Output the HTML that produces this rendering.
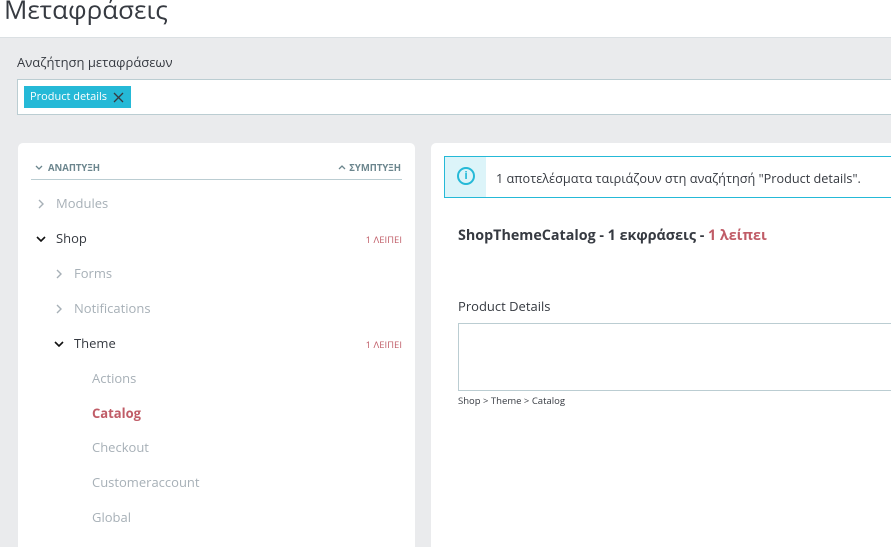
<!DOCTYPE html>
<html><head><meta charset="utf-8"><style>
*{margin:0;padding:0;box-sizing:border-box}
html,body{width:891px;height:547px;overflow:hidden}
body{background:#eaebed;font-family:"Open Sans","Liberation Sans","DejaVu Sans",sans-serif;color:#363a41;position:relative}
.hdr{position:absolute;left:0;top:0;width:891px;height:38px;background:#fff;border-bottom:1px solid #dbe0e3}
.hdr h1{position:absolute;left:4px;top:-9px;font-size:26px;font-weight:400;color:#363a41}
.lbl{position:absolute;left:17px;top:53px;font-size:13px}
.inp{position:absolute;left:17px;top:79px;width:880px;height:36px;background:#fff;border:1px solid #bbcdd2}
.chip{position:absolute;left:6px;top:6px;width:107px;height:22px;background:#25b9d7;color:#fff;font-size:11px;padding:3px 0 0 6px}
.panel{position:absolute;background:#fff;border-radius:5px;top:143px}
.row{position:absolute;font-size:13px;line-height:18px}
.miss{position:absolute;right:13px;font-size:9.5px;color:#c05c67}
.g{color:#a7b0b7}
svg.c{position:absolute}
</style></head><body>
<div class="hdr"><h1>Μεταφράσεις</h1></div>
<div class="lbl">Αναζήτηση μεταφράσεων</div>
<div class="inp"><div class="chip">Product details
<svg style="position:absolute;left:89px;top:6px" width="11" height="11" viewBox="0 0 11 11"><path d="M1 1L10 10M10 1L1 10" stroke="#363a41" stroke-width="1.3"/></svg></div></div>

<div class="panel" style="left:18px;width:397px;height:420px">
  <svg class="c" style="left:17px;top:22px" width="8" height="5" viewBox="0 0 8 5"><path d="M1 1L4 4L7 1" stroke="#6c868e" stroke-width="1.3" fill="none"/></svg>
  <div style="position:absolute;left:30px;top:18px;font-size:9.5px;font-weight:700;color:#6c868e">ΑΝΑΠΤΥΞΗ</div>
  <svg class="c" style="left:320px;top:22px" width="8" height="5" viewBox="0 0 8 5"><path d="M1 4L4 1L7 4" stroke="#6c868e" stroke-width="1.3" fill="none"/></svg>
  <div style="position:absolute;right:14px;top:18px;font-size:9.5px;font-weight:700;color:#6c868e">ΣΥΜΠΤΥΞΗ</div>
  <div style="position:absolute;left:13px;top:36px;width:371px;height:1px;background:#bbcdd2"></div>

  <svg class="c" style="left:20px;top:56px" width="6" height="10" viewBox="0 0 6 10"><path d="M1 1L5 5L1 9" stroke="#a7b0b7" stroke-width="1.4" fill="none"/></svg>
  <div class="row g" style="left:38px;top:51px">Modules</div>
  <svg class="c" style="left:18px;top:93px" width="10" height="6" viewBox="0 0 10 6"><path d="M1 1L5 5L9 1" stroke="#111" stroke-width="1.6" fill="none"/></svg>
  <div class="row" style="left:38px;top:86px">Shop</div><div class="miss" style="top:90px">1 ΛΕΙΠΕΙ</div>
  <svg class="c" style="left:38px;top:126px" width="6" height="10" viewBox="0 0 6 10"><path d="M1 1L5 5L1 9" stroke="#a7b0b7" stroke-width="1.4" fill="none"/></svg>
  <div class="row g" style="left:56px;top:121px">Forms</div>
  <svg class="c" style="left:38px;top:161px" width="6" height="10" viewBox="0 0 6 10"><path d="M1 1L5 5L1 9" stroke="#a7b0b7" stroke-width="1.4" fill="none"/></svg>
  <div class="row g" style="left:56px;top:156px">Notifications</div>
  <svg class="c" style="left:36px;top:198px" width="10" height="6" viewBox="0 0 10 6"><path d="M1 1L5 5L9 1" stroke="#111" stroke-width="1.6" fill="none"/></svg>
  <div class="row" style="left:56px;top:191px">Theme</div><div class="miss" style="top:195px">1 ΛΕΙΠΕΙ</div>
  <div class="row g" style="left:74px;top:226px">Actions</div>
  <div class="row" style="left:74px;top:261px;color:#c05c67;font-weight:700">Catalog</div>
  <div class="row g" style="left:74px;top:295px">Checkout</div>
  <div class="row g" style="left:74px;top:330px">Customeraccount</div>
  <div class="row g" style="left:74px;top:365px">Global</div>
</div>

<div class="panel" style="left:431px;width:470px;height:420px">
  <div style="position:absolute;left:13px;top:13px;width:460px;height:42px;border:1px solid #25b9d7;background:#fff">
    <div style="position:absolute;left:0;top:0;width:41px;height:40px;background:#dcf4f9"></div>
    <div style="position:absolute;left:12px;top:10px;width:18px;height:18px;border:2px solid #25b9d7;border-radius:50%;color:#25b9d7;font-size:11px;font-weight:700;text-align:center;line-height:14px">i</div>
    <div style="position:absolute;left:51px;top:12px;font-size:12.7px">1 αποτελέσματα ταιριάζουν στη αναζήτησή "Product details".</div>
  </div>
  <div style="position:absolute;left:27px;top:83px;font-size:14.3px;font-weight:700">ShopThemeCatalog - 1 εκφράσεις - <span style="color:#c05c67">1 λείπει</span></div>
  <div style="position:absolute;left:27px;top:154px;font-size:13px">Product Details</div>
  <div style="position:absolute;left:27px;top:180px;width:450px;height:68px;border:1px solid #bbcdd2"></div>
  <div style="position:absolute;left:27px;top:251px;font-size:9.5px">Shop &gt; Theme &gt; Catalog</div>
</div>
</body></html>
